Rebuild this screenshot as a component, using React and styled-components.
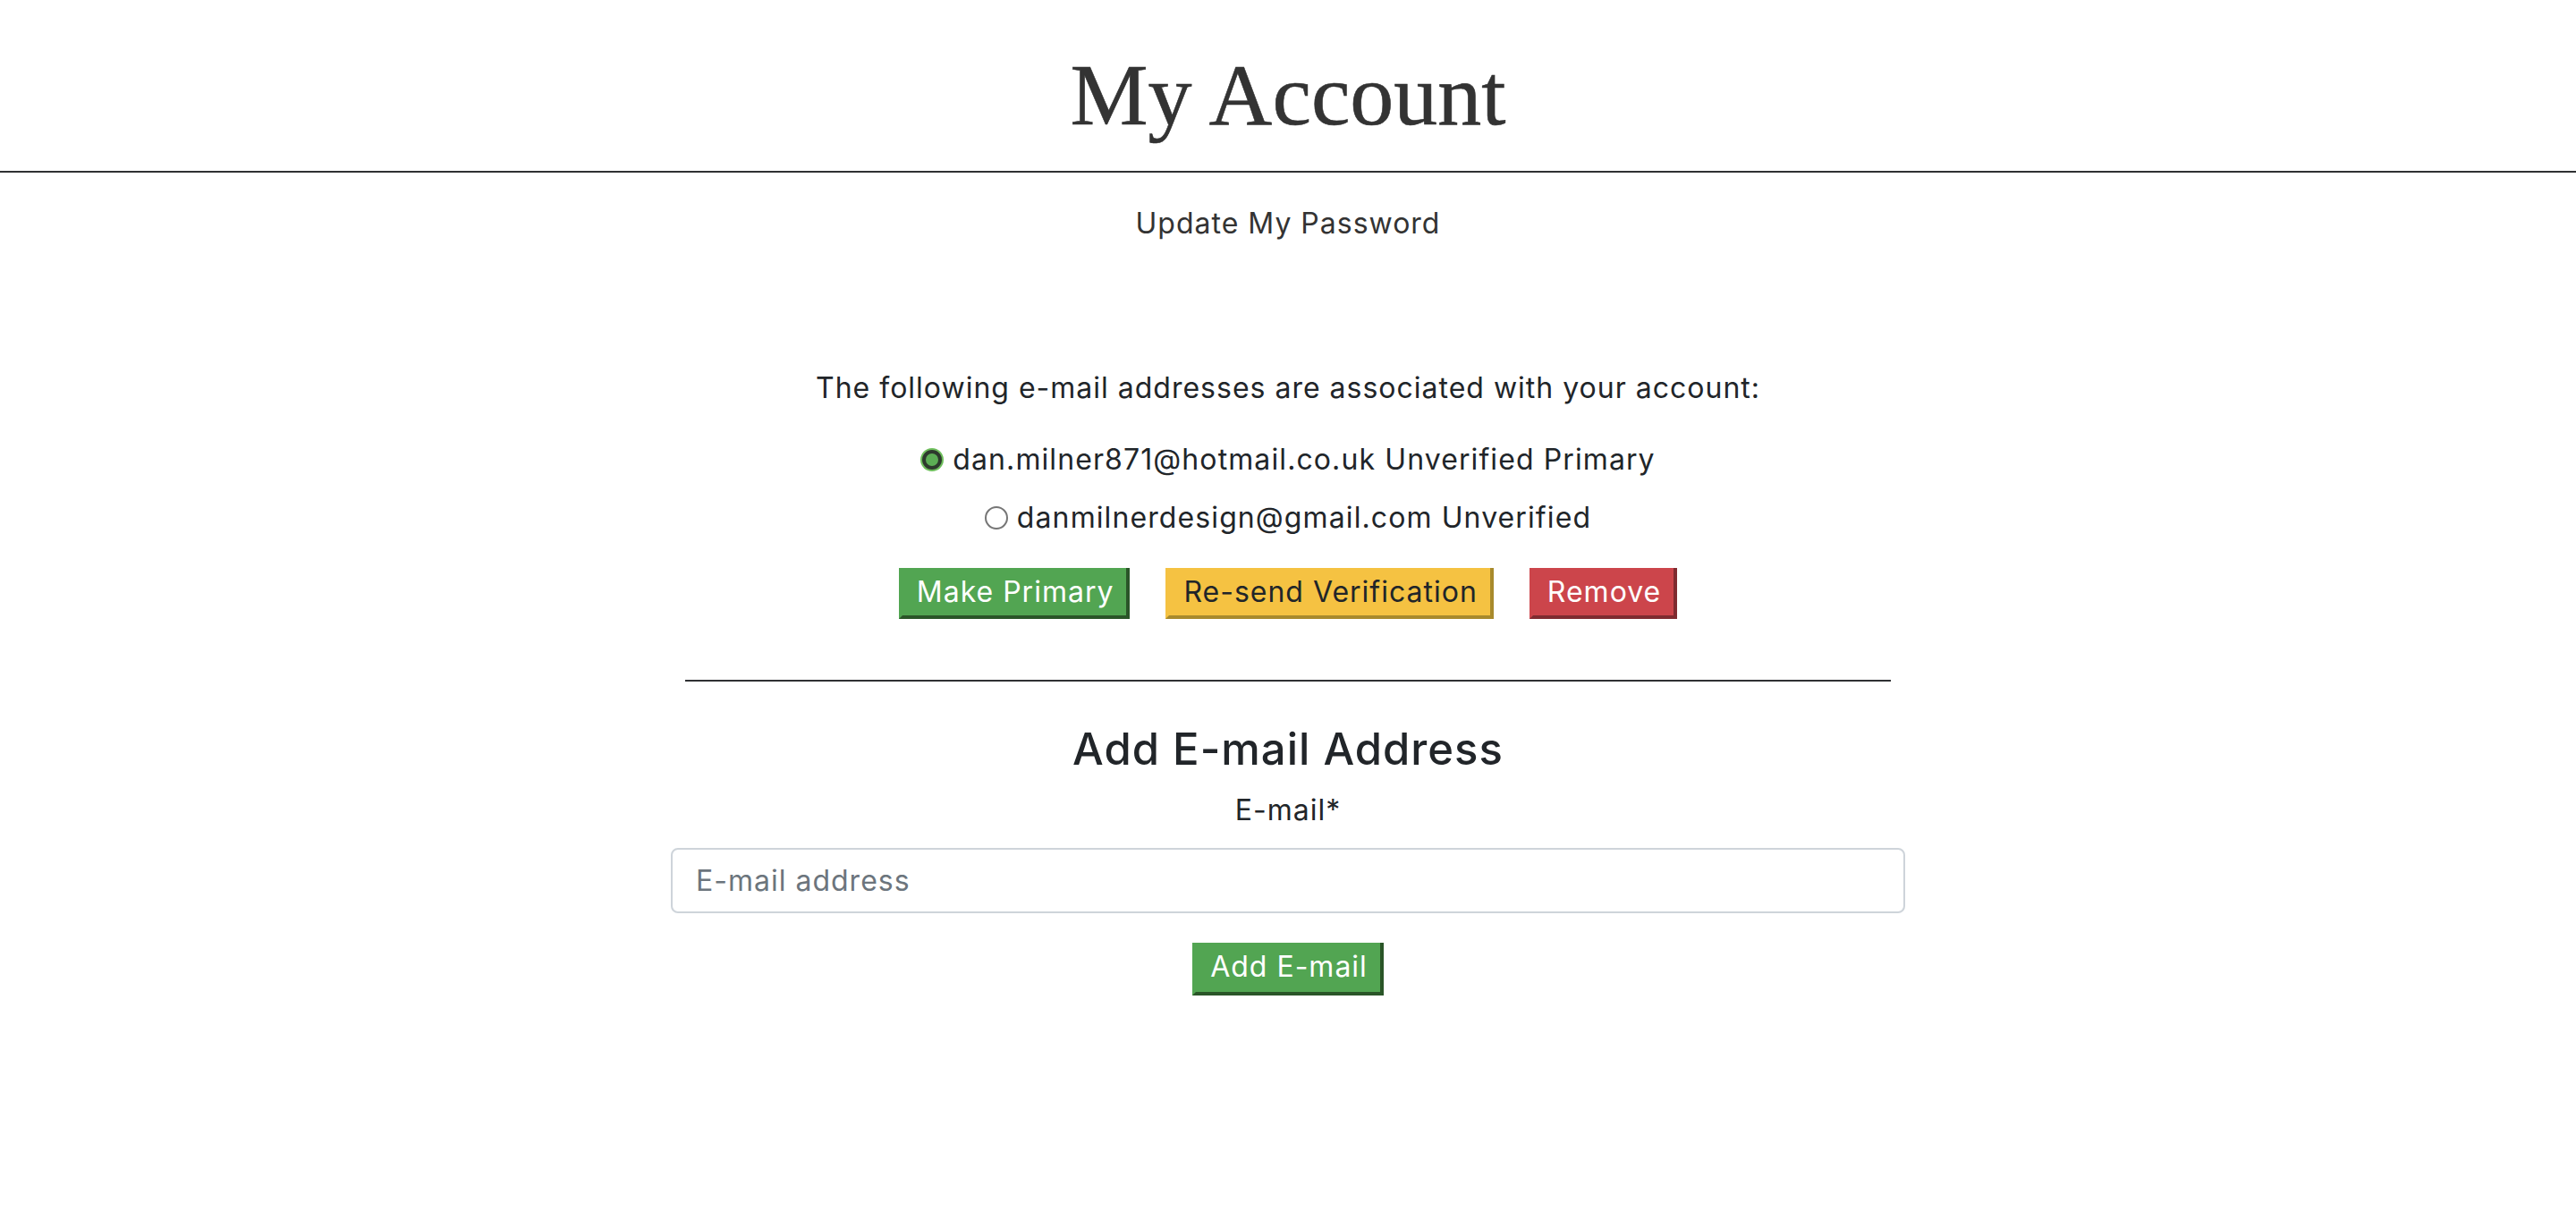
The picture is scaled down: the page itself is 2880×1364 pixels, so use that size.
import styled, { createGlobalStyle } from "styled-components";

const GlobalStyle = createGlobalStyle`
  html, body {
    margin: 0;
    padding: 0;
    background: #fff;
  }
  body {
    font-family: Inter, "DejaVu Sans", sans-serif;
    color: #212529;
  }
`;

const Header = styled.header`
  border-bottom: 2px solid #2f3133;
  height: 191px;
  display: flex;
  justify-content: center;
  align-items: flex-end;
`;

const Title = styled.h1`
  margin: 0 0 36px;
  font-family: "Liberation Serif", "Times New Roman", serif;
  font-weight: 400;
  font-size: 98px;
  line-height: 1;
  color: #333;
  -webkit-text-stroke: 0.6px #333;
`;

const Main = styled.main`
  display: flex;
  flex-direction: column;
  align-items: center;
`;

const PasswordLink = styled.a`
  margin-top: 33px;
  font-size: 32px;
  letter-spacing: 1px;
  line-height: 1.5;
  color: #333;
  text-decoration: none;
`;

const EmailSection = styled.section`
  width: 1380px;
  display: flex;
  flex-direction: column;
  align-items: center;
  margin-top: 136px;
`;

const Intro = styled.p`
  margin: 0;
  font-size: 32px;
  letter-spacing: 1px;
  line-height: 1.5;
`;

const RadioList = styled.div`
  display: flex;
  flex-direction: column;
  align-items: center;
  gap: 17px;
  margin-top: 32px;
`;

const RadioRow = styled.label`
  display: flex;
  align-items: center;
  gap: 10px;
  font-size: 32px;
  letter-spacing: 1.1px;
  line-height: 1.5;
`;

const Radio = styled.span`
  box-sizing: border-box;
  width: ${(p) => (p.$checked ? 22 : 26)}px;
  height: ${(p) => (p.$checked ? 22 : 26)}px;
  margin: ${(p) => (p.$checked ? "2px" : "0")};
  border-radius: 50%;
  border: ${(p) => (p.$checked ? "4px solid #2d3a2d" : "2px solid #767676")};
  background: ${(p) => (p.$checked ? "#5cad55" : "#fff")};
  box-shadow: ${(p) => (p.$checked ? "0 0 0 2px #6fbf5d" : "none")};
`;

const ButtonRow = styled.div`
  display: flex;
  gap: 40px;
  margin-top: 32px;
`;

const tones = {
  green: { bg: "#52a552", dark: "#2a5528", text: "#fff" },
  yellow: { bg: "#f5c242", dark: "#a88a2c", text: "#212529" },
  red: { bg: "#cc454b", dark: "#7f2b30", text: "#fff" },
};

const Button = styled.button`
  box-sizing: border-box;
  height: ${(p) => (p.$tall ? 59 : 57)}px;
  padding: 0 14px 0 16px;
  font-family: inherit;
  font-size: 32px;
  letter-spacing: 1px;
  line-height: 1;
  color: ${(p) => tones[p.$tone].text};
  background: ${(p) => tones[p.$tone].bg};
  border-style: solid;
  border-width: 0 4px 4px 4px;
  border-color: ${(p) =>
    `${tones[p.$tone].bg} ${tones[p.$tone].dark} ${tones[p.$tone].dark} ${tones[p.$tone].bg}`};
  border-radius: 0;
  cursor: pointer;
`;

const Divider = styled.hr`
  width: 1348px;
  margin: 68px 0 0;
  border: 0;
  border-top: 2px solid #2f3133;
`;

const Heading = styled.h2`
  margin: 47px 0 0;
  font-size: 49px;
  letter-spacing: 1px;
  font-weight: 500;
  line-height: 1.2;
`;

const FieldLabel = styled.label`
  margin-top: 14px;
  font-size: 32px;
  letter-spacing: 1px;
  line-height: 1.5;
`;

const Input = styled.input`
  box-sizing: border-box;
  width: 1380px;
  height: 73px;
  margin-top: 18px;
  padding: 0 26px;
  font-family: inherit;
  font-size: 32px;
  letter-spacing: 1px;
  color: #212529;
  border: 2px solid #ced4da;
  border-radius: 8px;
  outline: none;

  &::placeholder {
    color: #6c757d;
  }
`;

const SubmitWrap = styled.div`
  margin-top: 33px;
`;

function App() {
  return (
    <>
      <GlobalStyle />
      <Header>
        <Title>My Account</Title>
      </Header>
      <Main>
        <PasswordLink href="#">Update My Password</PasswordLink>
        <EmailSection>
          <Intro>The following e-mail addresses are associated with your account:</Intro>
          <RadioList>
            <RadioRow>
              <Radio $checked />
              dan.milner871@hotmail.co.uk Unverified Primary
            </RadioRow>
            <RadioRow>
              <Radio />
              danmilnerdesign@gmail.com Unverified
            </RadioRow>
          </RadioList>
          <ButtonRow>
            <Button $tone="green">Make Primary</Button>
            <Button $tone="yellow">Re-send Verification</Button>
            <Button $tone="red">Remove</Button>
          </ButtonRow>
          <Divider />
          <Heading>Add E-mail Address</Heading>
          <FieldLabel htmlFor="email">E-mail*</FieldLabel>
          <Input id="email" type="email" placeholder="E-mail address" />
          <SubmitWrap>
            <Button $tone="green" $tall>Add E-mail</Button>
          </SubmitWrap>
        </EmailSection>
      </Main>
    </>
  );
}

export default App;
